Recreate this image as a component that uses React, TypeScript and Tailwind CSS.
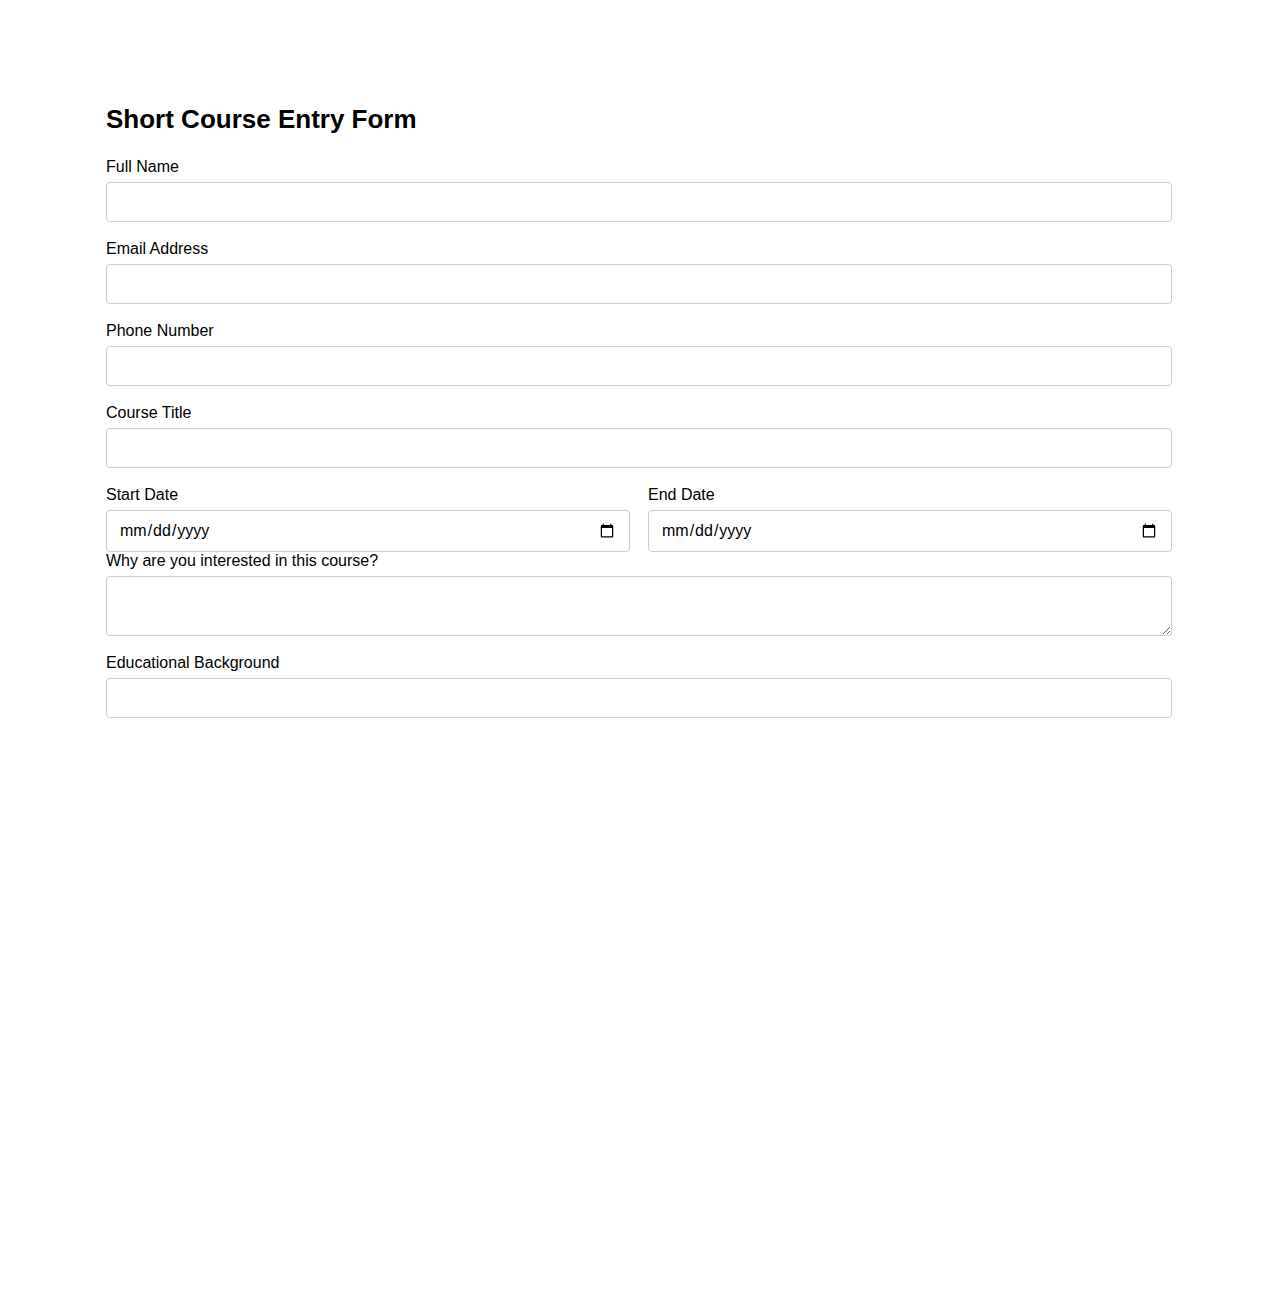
const fields = [
  { id: "fullName", label: "Full Name", type: "text" },
  { id: "email", label: "Email Address", type: "email" },
  { id: "phone", label: "Phone Number", type: "tel" },
  { id: "courseTitle", label: "Course Title", type: "text" },
];

const inputClass =
  "block w-full h-10 px-3 rounded border border-[#cccccc] bg-white text-base text-black outline-none";

const dateClass =
  "block w-full h-[42px] px-3 rounded border border-[#cccccc] bg-white text-base text-black outline-none";

export default function App() {
  return (
    <div className="min-h-screen bg-white text-black font-['Liberation_Sans',Arial,sans-serif]">
      <form className="mx-auto max-w-[1066px] pt-[104px]">
        <h1 className="text-[26px] leading-[30px] font-bold mb-6">Short Course Entry Form</h1>

        {fields.map((f) => (
          <div key={f.id} className="mb-[18px]">
            <label htmlFor={f.id} className="block text-base leading-[18px] mb-1.5">
              {f.label}
            </label>
            <input id={f.id} type={f.type} className={inputClass} />
          </div>
        ))}

        {/* dates sit side by side */}
        <div className="grid grid-cols-2 gap-[18px]">
          <div>
            <label htmlFor="startDate" className="block text-base leading-[18px] mb-1.5">
              Start Date
            </label>
            <input id="startDate" type="date" className={dateClass} />
          </div>
          <div>
            <label htmlFor="endDate" className="block text-base leading-[18px] mb-1.5">
              End Date
            </label>
            <input id="endDate" type="date" className={dateClass} />
          </div>
        </div>

        <div className="mb-[18px]">
          <label htmlFor="reason" className="block text-base leading-[18px] mb-1.5">
            Why are you interested in this course?
          </label>
          <textarea
            id="reason"
            className="block w-full h-[60px] px-3 py-2 rounded border border-[#cccccc] bg-white text-base text-black outline-none"
          />
        </div>

        <div className="mb-[18px]">
          <label htmlFor="education" className="block text-base leading-[18px] mb-1.5">
            Educational Background
          </label>
          <input id="education" type="text" className={inputClass} />
        </div>
      </form>
    </div>
  );
}
